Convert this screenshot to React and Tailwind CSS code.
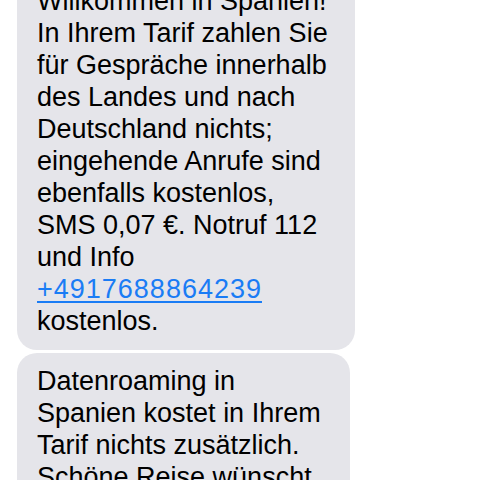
export default function App() {
  const font = { fontFamily: '"Liberation Sans", Arial, sans-serif' };
  return (
    <div className="h-[480px] w-[480px] overflow-hidden bg-white" style={font}>
      <div className="flex flex-col items-start gap-[3px] pl-[17px] -mt-[27px]">
        <div className="w-[338px] rounded-[20px] bg-[#e5e5ea] pl-[20px] pr-2 pt-[12px] pb-[13px] text-[27px] leading-[32px] text-black">
          Willkommen in Spanien!
          <br />
          In Ihrem Tarif zahlen Sie
          <br />
          für Gespräche innerhalb
          <br />
          des Landes und nach
          <br />
          Deutschland nichts;
          <br />
          eingehende Anrufe sind
          <br />
          ebenfalls kostenlos,
          <br />
          SMS 0,07 €. Notruf 112
          <br />
          und Info
          <br />
          <span className="tracking-[1px] text-[#1a7cf5] underline decoration-[1.5px] underline-offset-[3px]">
            +4917688864239
          </span>
          <br />
          kostenlos.
        </div>
        <div className="w-[333px] rounded-[20px] bg-[#e5e5ea] pl-[20px] pr-2 pt-[12px] pb-[14px] text-[27px] leading-[32px] text-black">
          Datenroaming in
          <br />
          Spanien kostet in Ihrem
          <br />
          Tarif nichts zusätzlich.
          <br />
          Schöne Reise wünscht
          <br />
          Ihr Team
        </div>
      </div>
    </div>
  );
}
